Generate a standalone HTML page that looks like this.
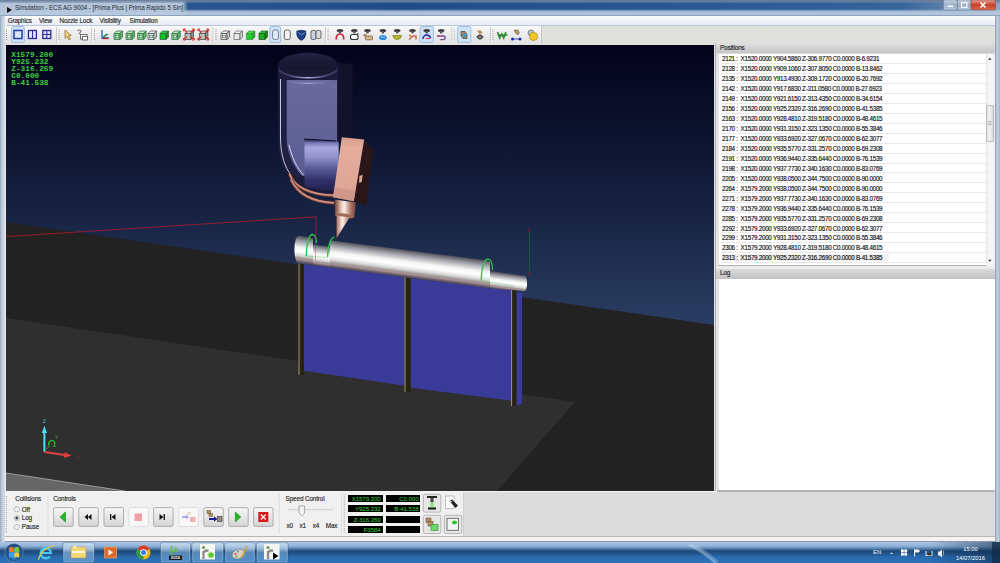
<!DOCTYPE html>
<html><head><meta charset="utf-8">
<style>
*{box-sizing:border-box}
html,body{margin:0;padding:0}
body{width:1000px;height:563px;overflow:hidden;position:relative;background:#b9c9da;font-family:"Liberation Sans",sans-serif;color:#222}
.a{position:absolute}
#frameL{left:0;top:0;width:6px;height:563px;background:linear-gradient(90deg,#8a9ab0 0,#b4c4d6 1px,#c6d2e0 3px,#d0d8e2 4.3px,#e4e6e8 5px,#e8e8e8 6px)}
#frameR{left:995px;top:0;width:5px;height:563px;background:linear-gradient(90deg,#8898aa 0,#a9bccf 1px,#c2d2e2 3px,#9fb0c4 5px)}
#title{left:0;top:0;width:1000px;height:16px;background:linear-gradient(90deg,#b4c4d8 0,#b4c6da 182px,#2a5690 188px,#1f4d88 400px,#2a5a92 700px,#33649a 900px,#6a8ab0 960px,#8fa8c4 1000px)}
#titleshade{left:0;top:0;width:1000px;height:16px;background:linear-gradient(180deg,#6a7a90 0,rgba(110,132,165,.85) 1px,rgba(110,132,165,.5) 2.5px,rgba(0,0,0,0) 3.5px,rgba(0,0,0,0) 9px,rgba(178,198,222,.9) 11.5px,rgba(185,203,225,.95) 15px,#8ea3bb 15px)}
#ttext{left:15px;top:4.1px;font-size:6.3px;letter-spacing:-0.085px;color:#2a3040;white-space:nowrap}
#menubar{left:4.5px;top:15.7px;width:990.5px;height:9.8px;background:linear-gradient(180deg,#fdfdfe,#e8ebf5)}
.mi{position:absolute;top:1.1px;font-size:6.3px;letter-spacing:-0.15px;color:#111;-webkit-text-stroke:0.15px #444;white-space:nowrap}
#toolbar{left:4.5px;top:25.5px;width:990.5px;height:19px;background:#e0e0dc}
#tbseg{left:4.5px;top:25.5px;width:537.5px;height:18.5px;background:linear-gradient(180deg,#fafafa 0,#f0f0f0 30%,#e2e2e2 100%);border-right:1px solid #c8c8c8}
#vp{left:6px;top:45px;width:708px;height:446px}
#vptop{left:6px;top:44px;width:708px;height:1px;background:#20202a}
#rpanel{left:714px;top:44px;width:281px;height:447px;background:#dcdcdc}
#ctrl{left:4.5px;top:491px;width:990.5px;height:45px;background:#dcdcdc;border-top:1px solid #f6f6f6}
#strip{left:4.5px;top:536px;width:990.5px;height:6px;background:#f4f4f4;border-top:1px solid #bdb6ae;border-bottom:1px solid #8a98a8}
#taskbar{left:0;top:542px;width:1000px;height:21px;background:linear-gradient(180deg,#6b8db5 0,#2f5d8d 40%,#25507c 100%)}
#poshdr{left:716px;top:42.8px;width:279px;height:10.7px;background:linear-gradient(180deg,#dedede,#c6c6c6);font-size:6.4px;letter-spacing:-0.15px;padding:1.2px 0 0 4px;color:#111;-webkit-text-stroke:0.15px #444}
#list{left:717px;top:53.5px;width:278px;height:212.5px;background:#fff;border-left:2px solid #e4e4e4;border-bottom:1.5px solid #b0b0b0;overflow:hidden}
.row{position:absolute;left:719px;width:266.5px;height:9.95px;border-bottom:1px solid #e8e8e8;font-size:6.3px;letter-spacing:-0.3px;white-space:nowrap;padding:1.3px 0 0 1px;color:#000;-webkit-text-stroke:0.15px #333}
.row.sel span{background:#f0f0f0;padding-right:7px}
#sb{left:985.5px;top:53.5px;width:9.5px;height:212px;background:linear-gradient(90deg,#e6e6e6,#f6f6f6 30%,#f6f6f6 70%,#ececec)}
#thumb{left:986px;top:105px;width:8px;height:36.5px;background:linear-gradient(90deg,#e2e2e2,#f2f2f2 50%,#d8d8d8);border:1px solid #bcbcbc;border-radius:1px}
#loghdr{left:716px;top:268.6px;width:279px;height:10px;background:linear-gradient(180deg,#dadada,#c2c2c2);font-size:6.4px;letter-spacing:-0.15px;padding:0.9px 0 0 4px;color:#111;-webkit-text-stroke:0.15px #444}
#log{left:717px;top:278.5px;width:278px;height:214px;background:#fff;border-left:2px solid #e4e4e4;border-bottom:1.6px solid #b8b8b8}
#split{left:714px;top:44px;width:3px;height:447px;background:linear-gradient(90deg,#e6e6e6 0,#e6e6e6 1px,#a9a9a9 1px,#a9a9a9 2px,#e8e8e8 2px)}
.dro{position:absolute;width:34.3px;height:7px;background:#000;color:#3ad23a;font-size:6.2px;line-height:7px;text-align:right;padding-right:2px;white-space:nowrap;letter-spacing:-0.1px}
.btn{position:absolute;width:19.5px;height:19px;border:1px solid #a8a8a8;border-radius:2px;background:linear-gradient(180deg,#f6f6f6 0,#e8e8e8 50%,#d6d6d6 100%)}
.lbl{position:absolute;font-size:6.3px;color:#111;-webkit-text-stroke:0.15px #444;white-space:nowrap;letter-spacing:-0.1px}
#ctrlseg{left:4.5px;top:492px;width:459px;height:43.5px;background:#f0f0f0;border-right:1px solid #d0d0d0}
.ovl{left:11.3px;font-family:"Liberation Mono",monospace;font-weight:bold;font-size:7.75px;line-height:6.9px;color:#3ad23a;white-space:nowrap}

</style></head><body>
<div class="a" id="frameL"></div>
<div class="a" id="frameR"></div>
<div class="a" id="title"></div>
<div class="a" id="titleshade"></div>
<svg class="a" style="left:0;top:0" width="20" height="16" viewBox="0 0 20 16"><path d="M5,4.5 h4 l-1,1.5 h-2.2 v5 h-0.8 Z" fill="#c8c8c8"/><path d="M7,7 l5,3 -5,3 Z" fill="#111"/></svg>
<svg class="a" style="left:940px;top:0" width="56" height="12" viewBox="940 0 56 12">
<defs><linearGradient id="wbg" x1="0" y1="0" x2="0" y2="1"><stop offset="0" stop-color="#c8d4e2"/><stop offset="0.5" stop-color="#9aaec4"/><stop offset="1" stop-color="#b8c8da"/></linearGradient>
<linearGradient id="wcl" x1="0" y1="0" x2="0" y2="1"><stop offset="0" stop-color="#e8a090"/><stop offset="0.5" stop-color="#c8402a"/><stop offset="1" stop-color="#d86a50"/></linearGradient></defs>
<rect x="943.4" y="0" width="14" height="10" rx="1.5" fill="url(#wbg)" stroke="#6a7a8e" stroke-width="0.5"/>
<rect x="957.4" y="0" width="13.6" height="10" rx="1.5" fill="url(#wbg)" stroke="#6a7a8e" stroke-width="0.5"/>
<rect x="971" y="0" width="24.5" height="10" rx="1.5" fill="url(#wcl)" stroke="#7a4a40" stroke-width="0.5"/>
<rect x="947.5" y="5.5" width="5.5" height="1.5" fill="#fff"/>
<rect x="961.5" y="2.8" width="5.5" height="4.5" fill="none" stroke="#fff" stroke-width="1"/>
<path d="M980.5,2.5 l5,5 M985.5,2.5 l-5,5" stroke="#fff" stroke-width="1.5"/>
</svg>
<div class="a" id="ttext">Simulation - ECS AG 9004 - [Prima Plus | Prima Rapido 5 Sin]</div>
<div class="a" id="menubar">
 <span class="mi" style="left:3.2px">Graphics</span>
 <span class="mi" style="left:34.5px">View</span>
 <span class="mi" style="left:55px">Nozzle Lock</span>
 <span class="mi" style="left:95px">Visibility</span>
 <span class="mi" style="left:125.1px">Simulation</span>
</div>
<div class="a" id="toolbar"></div><div class="a" id="tbseg"></div>
<svg class="a" style="left:0;top:25px" width="545" height="19" viewBox="0 25 545 19"><rect x="6.0" y="29" width="1" height="1" fill="#9a9a9a"/><rect x="6.0" y="31" width="1" height="1" fill="#9a9a9a"/><rect x="6.0" y="33" width="1" height="1" fill="#9a9a9a"/><rect x="6.0" y="35" width="1" height="1" fill="#9a9a9a"/><rect x="6.0" y="37" width="1" height="1" fill="#9a9a9a"/><rect x="6.0" y="39" width="1" height="1" fill="#9a9a9a"/><rect x="58.5" y="29" width="1" height="1" fill="#9a9a9a"/><rect x="58.5" y="31" width="1" height="1" fill="#9a9a9a"/><rect x="58.5" y="33" width="1" height="1" fill="#9a9a9a"/><rect x="58.5" y="35" width="1" height="1" fill="#9a9a9a"/><rect x="58.5" y="37" width="1" height="1" fill="#9a9a9a"/><rect x="58.5" y="39" width="1" height="1" fill="#9a9a9a"/><rect x="93.9" y="29" width="1" height="1" fill="#9a9a9a"/><rect x="93.9" y="31" width="1" height="1" fill="#9a9a9a"/><rect x="93.9" y="33" width="1" height="1" fill="#9a9a9a"/><rect x="93.9" y="35" width="1" height="1" fill="#9a9a9a"/><rect x="93.9" y="37" width="1" height="1" fill="#9a9a9a"/><rect x="93.9" y="39" width="1" height="1" fill="#9a9a9a"/><rect x="215.4" y="29" width="1" height="1" fill="#9a9a9a"/><rect x="215.4" y="31" width="1" height="1" fill="#9a9a9a"/><rect x="215.4" y="33" width="1" height="1" fill="#9a9a9a"/><rect x="215.4" y="35" width="1" height="1" fill="#9a9a9a"/><rect x="215.4" y="37" width="1" height="1" fill="#9a9a9a"/><rect x="215.4" y="39" width="1" height="1" fill="#9a9a9a"/><rect x="327.5" y="29" width="1" height="1" fill="#9a9a9a"/><rect x="327.5" y="31" width="1" height="1" fill="#9a9a9a"/><rect x="327.5" y="33" width="1" height="1" fill="#9a9a9a"/><rect x="327.5" y="35" width="1" height="1" fill="#9a9a9a"/><rect x="327.5" y="37" width="1" height="1" fill="#9a9a9a"/><rect x="327.5" y="39" width="1" height="1" fill="#9a9a9a"/><rect x="453.5" y="29" width="1" height="1" fill="#9a9a9a"/><rect x="453.5" y="31" width="1" height="1" fill="#9a9a9a"/><rect x="453.5" y="33" width="1" height="1" fill="#9a9a9a"/><rect x="453.5" y="35" width="1" height="1" fill="#9a9a9a"/><rect x="453.5" y="37" width="1" height="1" fill="#9a9a9a"/><rect x="453.5" y="39" width="1" height="1" fill="#9a9a9a"/><rect x="492.3" y="29" width="1" height="1" fill="#9a9a9a"/><rect x="492.3" y="31" width="1" height="1" fill="#9a9a9a"/><rect x="492.3" y="33" width="1" height="1" fill="#9a9a9a"/><rect x="492.3" y="35" width="1" height="1" fill="#9a9a9a"/><rect x="492.3" y="37" width="1" height="1" fill="#9a9a9a"/><rect x="492.3" y="39" width="1" height="1" fill="#9a9a9a"/><rect x="56.2" y="27" width="1" height="15" fill="#c4c4c4"/><rect x="57.2" y="27" width="1" height="15" fill="#fafafa"/><rect x="91.2" y="27" width="1" height="15" fill="#c4c4c4"/><rect x="92.2" y="27" width="1" height="15" fill="#fafafa"/><rect x="212.5" y="27" width="1" height="15" fill="#c4c4c4"/><rect x="213.5" y="27" width="1" height="15" fill="#fafafa"/><rect x="325.1" y="27" width="1" height="15" fill="#c4c4c4"/><rect x="326.1" y="27" width="1" height="15" fill="#fafafa"/><rect x="451.5" y="27" width="1" height="15" fill="#c4c4c4"/><rect x="452.5" y="27" width="1" height="15" fill="#fafafa"/><rect x="490.1" y="27" width="1" height="15" fill="#c4c4c4"/><rect x="491.1" y="27" width="1" height="15" fill="#fafafa"/><rect x="11.7" y="26.5" width="12.600000000000001" height="16" rx="1.5" fill="#cfe3f7" stroke="#8fb5dc" stroke-width="0.8"/><rect x="269.8" y="26.5" width="10.800000000000011" height="16" rx="1.5" fill="#cfe3f7" stroke="#8fb5dc" stroke-width="0.8"/><rect x="420" y="26.5" width="13.399999999999977" height="16" rx="1.5" fill="#cfe3f7" stroke="#8fb5dc" stroke-width="0.8"/><rect x="457.6" y="26.5" width="13.199999999999989" height="16" rx="1.5" fill="#cfe3f7" stroke="#8fb5dc" stroke-width="0.8"/><rect x="14" y="30.5" width="8" height="8" fill="#dbe6f8" stroke="#2a3aa8" stroke-width="1.5"/><rect x="28.4" y="30.5" width="8" height="8" fill="#dfe3f5" stroke="#2a2a9a" stroke-width="1.3"/><rect x="32" y="30.5" width="1" height="8" fill="#2a2a9a"/><rect x="42.8" y="30.5" width="8" height="8" fill="#dfe3f5" stroke="#2a2a9a" stroke-width="1.3"/><rect x="46.3" y="30.5" width="1" height="8" fill="#2a2a9a"/><rect x="42.8" y="34" width="8" height="1" fill="#2a2a9a"/><path d="M65,30 L65,38.5 L67,36.5 L69,40 L70.5,39.2 L68.6,35.8 L71.3,35.5 Z" fill="#f2d27a" stroke="#8a6a2a" stroke-width="0.7"/><path d="M77.5,31 q2,-2 3.5,0 q0,1.5 -1.7,2.3 v1" fill="none" stroke="#777" stroke-width="1.1"/><rect x="80.5" y="34.5" width="6.5" height="4.5" fill="#f4f4f4" stroke="#555" stroke-width="0.8"/><rect x="82.5" y="36.5" width="5" height="3.5" fill="#fff" stroke="#555" stroke-width="0.8"/><path d="M102,30 v9 M102,38 h7 M102,38 l5,-4" stroke="#2c6ac8" stroke-width="1.4" fill="none"/><path d="M103,37.5 l5,-3.5" stroke="#3a9a3a" stroke-width="1.4"/><path d="M102.5,38.5 h6" stroke="#c02020" stroke-width="1.4"/><path d="M114,33.5 h6 v6 h-6 Z" fill="#7cd488" stroke="#2a5a3a" stroke-width="0.65"/><path d="M114,33.5 l2.5,-2.5 h6 l-2.5,2.5 Z" fill="#b4ecb8" stroke="#2a5a3a" stroke-width="0.65"/><path d="M120,33.5 l2.5,-2.5 v6 l-2.5,2.5 Z" fill="#5cb868" stroke="#2a5a3a" stroke-width="0.65"/><rect x="115.5" y="35.2" width="3" height="2.6" fill="#e0f6e0" stroke="#2a5a3a" stroke-width="0.5"/><path d="M126,33.5 h6 v6 h-6 Z" fill="#7cd488" stroke="#2a5a3a" stroke-width="0.65"/><path d="M126,33.5 l2.5,-2.5 h6 l-2.5,2.5 Z" fill="#b4ecb8" stroke="#2a5a3a" stroke-width="0.65"/><path d="M132,33.5 l2.5,-2.5 v6 l-2.5,2.5 Z" fill="#5cb868" stroke="#2a5a3a" stroke-width="0.65"/><rect x="127.5" y="35.2" width="3" height="2.6" fill="#e0f6e0" stroke="#2a5a3a" stroke-width="0.5"/><path d="M137.6,33.5 h6 v6 h-6 Z" fill="#7cd488" stroke="#2a5a3a" stroke-width="0.65"/><path d="M137.6,33.5 l2.5,-2.5 h6 l-2.5,2.5 Z" fill="#b4ecb8" stroke="#2a5a3a" stroke-width="0.65"/><path d="M143.6,33.5 l2.5,-2.5 v6 l-2.5,2.5 Z" fill="#5cb868" stroke="#2a5a3a" stroke-width="0.65"/><rect x="139.1" y="35.2" width="3" height="2.6" fill="#e0f6e0" stroke="#2a5a3a" stroke-width="0.5"/><path d="M148,33.5 h6 v6 h-6 Z" fill="#d8ecd8" stroke="#3a3a4a" stroke-width="0.65"/><path d="M148,33.5 l2.5,-2.5 h6 l-2.5,2.5 Z" fill="#e8f4e8" stroke="#3a3a4a" stroke-width="0.65"/><path d="M154,33.5 l2.5,-2.5 v6 l-2.5,2.5 Z" fill="#b8d0b8" stroke="#3a3a4a" stroke-width="0.65"/><rect x="149.5" y="35.2" width="3" height="2.6" fill="#e0f6e0" stroke="#3a3a4a" stroke-width="0.5"/><path d="M160,33.5 h6 v6 h-6 Z" fill="#10c020" stroke="#2a5a3a" stroke-width="0.65"/><path d="M160,33.5 l2.5,-2.5 h6 l-2.5,2.5 Z" fill="#30d040" stroke="#2a5a3a" stroke-width="0.65"/><path d="M166,33.5 l2.5,-2.5 v6 l-2.5,2.5 Z" fill="#109020" stroke="#2a5a3a" stroke-width="0.65"/><path d="M171.8,33.5 h6 v6 h-6 Z" fill="#7cd488" stroke="#2a5a3a" stroke-width="0.65"/><path d="M171.8,33.5 l2.5,-2.5 h6 l-2.5,2.5 Z" fill="#b4ecb8" stroke="#2a5a3a" stroke-width="0.65"/><path d="M177.8,33.5 l2.5,-2.5 v6 l-2.5,2.5 Z" fill="#5cb868" stroke="#2a5a3a" stroke-width="0.65"/><rect x="173.3" y="35.2" width="3" height="2.6" fill="#e0f6e0" stroke="#2a5a3a" stroke-width="0.5"/><path d="M185.0,33.5 h6 v6 h-6 Z" fill="#b8c4b8" stroke="#333" stroke-width="0.65"/><path d="M185.0,33.5 l2.5,-2.5 h6 l-2.5,2.5 Z" fill="#d0d8d0" stroke="#333" stroke-width="0.65"/><path d="M191.0,33.5 l2.5,-2.5 v6 l-2.5,2.5 Z" fill="#8a9a8a" stroke="#333" stroke-width="0.65"/><path d="M184.0,29.5 l3,3 M193.8,29.5 l-3,3 M184.0,39.5 l3,-3 M193.8,39.5 l-3,-3" stroke="#d83030" stroke-width="1.4"/><path d="M183.5,29 h2.2 M183.5,29 v2.2 M194.3,29 h-2.2 M194.3,29 v2.2 M183.5,40 h2.2 M183.5,40 v-2.2 M194.3,40 h-2.2 M194.3,40 v-2.2" stroke="#d83030" stroke-width="1"/><path d="M199.4,33.5 h6 v6 h-6 Z" fill="#b8c4b8" stroke="#333" stroke-width="0.65"/><path d="M199.4,33.5 l2.5,-2.5 h6 l-2.5,2.5 Z" fill="#d0d8d0" stroke="#333" stroke-width="0.65"/><path d="M205.4,33.5 l2.5,-2.5 v6 l-2.5,2.5 Z" fill="#8a9a8a" stroke="#333" stroke-width="0.65"/><path d="M198.4,29.5 l3,3 M208.20000000000002,29.5 l-3,3 M198.4,39.5 l3,-3 M208.20000000000002,39.5 l-3,-3" stroke="#d83030" stroke-width="1.4"/><path d="M197.9,29 h2.2 M197.9,29 v2.2 M208.70000000000002,29 h-2.2 M208.70000000000002,29 v2.2 M197.9,40 h2.2 M197.9,40 v-2.2 M208.70000000000002,40 h-2.2 M208.70000000000002,40 v-2.2" stroke="#d83030" stroke-width="1"/><path d="M221,33.5 h6 v6 h-6 Z" fill="#e8e8e8" stroke="#333" stroke-width="0.65"/><path d="M221,33.5 l2.5,-2.5 h6 l-2.5,2.5 Z" fill="#f4f4f4" stroke="#333" stroke-width="0.65"/><path d="M227,33.5 l2.5,-2.5 v6 l-2.5,2.5 Z" fill="#cfcfcf" stroke="#333" stroke-width="0.65"/><rect x="222.5" y="35.2" width="3" height="2.6" fill="#e0f6e0" stroke="#333" stroke-width="0.5"/><path d="M234,33.5 h6 v6 h-6 Z" fill="#e8e8e8" stroke="#555" stroke-width="0.65"/><path d="M234,33.5 l2.5,-2.5 h6 l-2.5,2.5 Z" fill="#f4f4f4" stroke="#555" stroke-width="0.65"/><path d="M240,33.5 l2.5,-2.5 v6 l-2.5,2.5 Z" fill="#cfcfcf" stroke="#555" stroke-width="0.65"/><path d="M246.4,33.5 h6 v6 h-6 Z" fill="#22d22a" stroke="#3a8a3a" stroke-width="0.65"/><path d="M246.4,33.5 l2.5,-2.5 h6 l-2.5,2.5 Z" fill="#44e04a" stroke="#3a8a3a" stroke-width="0.65"/><path d="M252.4,33.5 l2.5,-2.5 v6 l-2.5,2.5 Z" fill="#22b02a" stroke="#3a8a3a" stroke-width="0.65"/><path d="M259,33.5 h6 v6 h-6 Z" fill="#18b020" stroke="#1a4a1a" stroke-width="0.65"/><path d="M259,33.5 l2.5,-2.5 h6 l-2.5,2.5 Z" fill="#30c838" stroke="#1a4a1a" stroke-width="0.65"/><path d="M265,33.5 l2.5,-2.5 v6 l-2.5,2.5 Z" fill="#108818" stroke="#1a4a1a" stroke-width="0.65"/><rect x="272.5" y="30" width="6" height="9.5" rx="2" fill="#dde6f2" stroke="#6a7a8a" stroke-width="0.9"/><rect x="284.3" y="30" width="6" height="9.5" rx="2" fill="#f2f2f2" stroke="#555" stroke-width="0.9"/><path d="M296.8,31 q4.5,-1.5 9,0 v4 q-1,4 -4.5,5.5 q-3.5,-1.5 -4.5,-5.5 Z" fill="#1d3f88" stroke="#0f2050" stroke-width="0.6"/><path d="M298.5,32.5 l3,2.5 l3,-2.5" stroke="#8ab0e0" stroke-width="0.8" fill="none"/><rect x="311" y="30.5" width="5" height="9" rx="1.5" fill="#c8d2e6" stroke="#555" stroke-width="0.9"/><rect x="316" y="30.5" width="5" height="8" rx="1.5" fill="#dcdcdc" stroke="#555" stroke-width="0.9"/><ellipse cx="340.0" cy="30.6" rx="3.3" ry="1.7" fill="#3a3a3a"/><rect x="338.8" y="31" width="2.4" height="2.4" fill="#555"/><path d="M336.2,39.5 q0,-5.5 3.8,-5.5 q3.8,0 3.8,5.5" fill="none" stroke="#c82a3a" stroke-width="1.7"/><ellipse cx="354.3" cy="30.6" rx="3.3" ry="1.7" fill="#3a3a3a"/><rect x="353.1" y="31" width="2.4" height="2.4" fill="#555"/><rect x="350.5" y="34.5" width="7.6" height="5" rx="2" fill="#fff" stroke="#333" stroke-width="1.1"/><circle cx="357.8" cy="34" r="0.7" fill="#000"/><ellipse cx="367.5" cy="30.6" rx="3.3" ry="1.7" fill="#3a3a3a"/><rect x="366.3" y="31" width="2.4" height="2.4" fill="#555"/><path d="M363.5,34 h3 v2.5 h-3 Z" fill="#b08060"/><rect x="365.5" y="36" width="7" height="3.8" rx="1" fill="#d8b890" stroke="#6a4a2a" stroke-width="0.7"/><ellipse cx="382.9" cy="30.6" rx="3.3" ry="1.7" fill="#3a3a3a"/><rect x="381.7" y="31" width="2.4" height="2.4" fill="#555"/><ellipse cx="382.9" cy="37.5" rx="3.8" ry="2.6" fill="#2a88d8"/><path d="M380.9,37 h4" stroke="#fff" stroke-width="0.6"/><ellipse cx="397.2" cy="30.6" rx="3.3" ry="1.7" fill="#3a3a3a"/><rect x="396.0" y="31" width="2.4" height="2.4" fill="#555"/><path d="M392.7,35.5 h9 q-1,4 -4.5,4 q-3.5,0 -4.5,-4 Z" fill="#b8b828" stroke="#6a6a10" stroke-width="0.6"/><ellipse cx="412.5" cy="30.6" rx="3.3" ry="1.7" fill="#3a3a3a"/><rect x="411.3" y="31" width="2.4" height="2.4" fill="#555"/><path d="M409.0,35 l3,2 l-3,2.5 M412.5,36 h3.5 v3.5" fill="none" stroke="#d8603a" stroke-width="1.4"/><ellipse cx="426.7" cy="30.6" rx="3.3" ry="1.7" fill="#3a3a3a"/><rect x="425.5" y="31" width="2.4" height="2.4" fill="#555"/><path d="M422.7,39 q1,-4 4,-4 q3,0 4,3" fill="none" stroke="#2a2a9a" stroke-width="1.4"/><path d="M425.7,38.5 h4.5" stroke="#d83a5a" stroke-width="1.2"/><ellipse cx="441.2" cy="30.6" rx="3.3" ry="1.7" fill="#3a3a3a"/><rect x="440.0" y="31" width="2.4" height="2.4" fill="#555"/><path d="M437.2,36 h6 q2,0 2,1.8 q0,1.8 -2,1.8 h-3" fill="none" stroke="#7a4a9a" stroke-width="1.3"/><path d="M437.2,36 h3" stroke="#d84a6a" stroke-width="1.3"/><path d="M461,31.5 h4 l2,3 v4 h-4 l-2,-3 Z" fill="#9a8a6a" stroke="#444" stroke-width="0.7"/><rect x="463" y="34" width="3" height="3" fill="#3a9aba"/><path d="M477,30.5 h4 l1.5,2.5 -3,1 Z" fill="#b08a5a"/><path d="M476,37 l4,-3 4,3 -4,3 Z" fill="#111"/><path d="M480,34 v6 M476,37 h8" stroke="#ddd" stroke-width="0.7"/><path d="M497.5,32 l2.2,6 l2,-4 l2,4 l2.2,-6 M497.5,35 h10" stroke="#2a8a2a" stroke-width="1.6" fill="none"/><path d="M514,30 h4 l1.5,3 -2,2 -2,-2 Z" fill="#b0965a" stroke="#555" stroke-width="0.5"/><circle cx="512.5" cy="39" r="1.5" fill="#1a2aa8"/><circle cx="520" cy="39" r="1.5" fill="#1a2aa8"/><path d="M513,39 h7" stroke="#1a2aa8" stroke-width="0.8"/><circle cx="531" cy="33" r="3" fill="#b8c0c8" stroke="#6a6a6a" stroke-width="0.7"/><circle cx="533.5" cy="36.5" r="4" fill="#f0c820" stroke="#b08a10" stroke-width="0.7"/></svg>
<svg class="a" id="vp" viewBox="6 45 708 446" width="708" height="446" style="left:6px;top:45px">
<defs>
<linearGradient id="sky" x1="0" y1="45" x2="0" y2="330" gradientUnits="userSpaceOnUse">
 <stop offset="0" stop-color="#03031a"/><stop offset="0.45" stop-color="#111a38"/><stop offset="1" stop-color="#2b3e63"/>
</linearGradient>
<linearGradient id="pipeg" x1="0" y1="0" x2="0" y2="1">
 <stop offset="0" stop-color="#55555c"/><stop offset="0.2" stop-color="#a8a8aa"/><stop offset="0.45" stop-color="#ffffff"/>
 <stop offset="0.62" stop-color="#f0f0f0"/><stop offset="0.8" stop-color="#9a9a9a"/><stop offset="0.93" stop-color="#6a4a4a"/><stop offset="1" stop-color="#3a2a30"/>
</linearGradient>
<linearGradient id="capg" x1="0" y1="0" x2="1" y2="0">
 <stop offset="0" stop-color="#8a8a8e"/><stop offset="0.5" stop-color="#d8d8d8"/><stop offset="1" stop-color="#f4f4f4"/>
</linearGradient>
<linearGradient id="facelav" x1="0" y1="0" x2="0" y2="1">
 <stop offset="0" stop-color="#6a6a9c"/><stop offset="1" stop-color="#5a5c92"/>
</linearGradient>
<linearGradient id="smallcyl" x1="0" y1="0" x2="0" y2="1">
 <stop offset="0" stop-color="#1a1a40"/><stop offset="0.07" stop-color="#7a7ab8"/><stop offset="0.16" stop-color="#aaaae0"/><stop offset="0.35" stop-color="#9090c8"/><stop offset="0.55" stop-color="#5a5a98"/><stop offset="0.78" stop-color="#30306a"/><stop offset="1" stop-color="#22224a"/>
</linearGradient>
<linearGradient id="copperf" x1="0" y1="0" x2="0" y2="1">
 <stop offset="0" stop-color="#d89c8c"/><stop offset="0.15" stop-color="#e4ac9c"/><stop offset="1" stop-color="#dca494"/>
</linearGradient>
<linearGradient id="collarg" x1="0" y1="0" x2="1" y2="0">
 <stop offset="0" stop-color="#6a3a32"/><stop offset="0.3" stop-color="#e8c0b0"/><stop offset="0.45" stop-color="#fff0ea"/><stop offset="0.75" stop-color="#b07868"/><stop offset="1" stop-color="#6a4038"/>
</linearGradient>
<linearGradient id="coneg" x1="0" y1="0" x2="1" y2="0">
 <stop offset="0" stop-color="#a87060"/><stop offset="0.45" stop-color="#fff0e8"/><stop offset="1" stop-color="#b07868"/>
</linearGradient>
<linearGradient id="capdisc" x1="0" y1="0" x2="0" y2="1">
 <stop offset="0" stop-color="#222244"/><stop offset="0.6" stop-color="#15152e"/><stop offset="1" stop-color="#20203e"/>
</linearGradient>
</defs>
<rect x="6" y="45" width="708" height="446" fill="url(#sky)"/>
<polygon points="6,222 714,325 714,491 6,491" fill="#222222"/>
<polygon points="6,318 575,402 497,491 6,491" fill="#2f2f2f"/>
<polygon points="6,473 125,491 6,491" fill="#666"/><path d="M6,473 L125,491" stroke="#b0b0b0" stroke-width="0.8"/>
<path d="M6,236.6 L316,216.8 L316,259" fill="none" stroke="#b01c30" stroke-width="0.8"/>
<path d="M529.5,229 L529.5,275" fill="none" stroke="#a01c30" stroke-width="0.8"/>
<polygon points="516.4,292 522,293 522,403.4 516.4,406" fill="#3a3aa0"/>
<polygon points="304,258 405,272 405,385.8 304,370.7" fill="#3a3a98"/>
<polygon points="410.7,273 511,288 511,400.6 410.7,387.8" fill="#3a3a98"/>
<rect x="298.5" y="255" width="5.5" height="120" fill="#262410"/>
<rect x="298.5" y="255" width="1.1" height="120" fill="#9a8a70"/>
<rect x="404.5" y="270" width="6.0" height="122" fill="#262410"/>
<rect x="404.5" y="270" width="1.1" height="122" fill="#9a8a70"/>
<rect x="511" y="286" width="5.399999999999977" height="120" fill="#262410"/>
<rect x="511" y="286" width="1.1" height="120" fill="#9a8a70"/>
<defs><linearGradient id="pgA" gradientUnits="userSpaceOnUse" x1="300" y1="236" x2="296.45" y2="263.28"><stop offset="0" stop-color="#4a4a54"/><stop offset="0.18" stop-color="#9c9ca4"/><stop offset="0.42" stop-color="#f6f6f6"/><stop offset="0.55" stop-color="#ffffff"/><stop offset="0.7" stop-color="#d8d8d8"/><stop offset="0.8" stop-color="#a09898"/><stop offset="0.86" stop-color="#a88c8c"/><stop offset="0.92" stop-color="#686070"/><stop offset="1" stop-color="#3a3a50"/></linearGradient><linearGradient id="pgB" gradientUnits="userSpaceOnUse" x1="320" y1="245" x2="317.23" y2="266.33"><stop offset="0" stop-color="#4a4a54"/><stop offset="0.18" stop-color="#9c9ca4"/><stop offset="0.42" stop-color="#f6f6f6"/><stop offset="0.55" stop-color="#ffffff"/><stop offset="0.7" stop-color="#d8d8d8"/><stop offset="0.8" stop-color="#a09898"/><stop offset="0.86" stop-color="#a88c8c"/><stop offset="0.92" stop-color="#686070"/><stop offset="1" stop-color="#3a3a50"/></linearGradient><linearGradient id="pgC" gradientUnits="userSpaceOnUse" x1="400" y1="248.9" x2="396.38" y2="276.78"><stop offset="0" stop-color="#4a4a54"/><stop offset="0.18" stop-color="#9c9ca4"/><stop offset="0.42" stop-color="#f6f6f6"/><stop offset="0.55" stop-color="#ffffff"/><stop offset="0.7" stop-color="#d8d8d8"/><stop offset="0.8" stop-color="#a09898"/><stop offset="0.86" stop-color="#a88c8c"/><stop offset="0.92" stop-color="#686070"/><stop offset="1" stop-color="#3a3a50"/></linearGradient><linearGradient id="pgD" gradientUnits="userSpaceOnUse" x1="505" y1="273" x2="502.74" y2="290.36"><stop offset="0" stop-color="#4a4a54"/><stop offset="0.18" stop-color="#9c9ca4"/><stop offset="0.42" stop-color="#f6f6f6"/><stop offset="0.55" stop-color="#ffffff"/><stop offset="0.7" stop-color="#d8d8d8"/><stop offset="0.8" stop-color="#a09898"/><stop offset="0.86" stop-color="#a88c8c"/><stop offset="0.92" stop-color="#686070"/><stop offset="1" stop-color="#3a3a50"/></linearGradient></defs>
<path d="M299,235.6 L313,238.2 L313,265.6 L299,263.8 Q294.6,262.3 294.6,250 Q294.6,236.5 299,235.6 Z" fill="url(#pgA)"/>
<polygon points="313,244.5 330,246.5 330,267.8 313,265.6" fill="url(#pgB)"/>
<polygon points="330,240.3 490,260.8 490,288.6 330,267.8" fill="url(#pgC)"/>
<polygon points="490,270.8 524.5,275.8 524.5,291 490,288.6" fill="url(#pgD)"/>
<ellipse cx="524.5" cy="283.4" rx="2.6" ry="7.6" fill="url(#pgD)"/>
<defs><linearGradient id="lcap" x1="0" y1="0" x2="1" y2="0"><stop offset="0" stop-color="#6a6a74"/><stop offset="0.5" stop-color="#b4b4b8"/><stop offset="1" stop-color="#d0d0d4"/></linearGradient></defs>
<path d="M295.5,244 Q295,250 296,256" stroke="#ffffff" stroke-width="2" opacity="0.35" fill="none"/>
<path d="M306.3,256 C306.5,242 309.5,234.5 312.3,234.5 C314.8,234.6 316.3,238 316.3,243" fill="none" stroke="#28c848" stroke-width="1.3"/>
<path d="M327.6,257 C328,246 330.5,238 334.5,236.8" fill="none" stroke="#28c848" stroke-width="1.3"/>
<path d="M306.3,256 L327.6,257.5" stroke="#60d070" stroke-width="0.7" opacity="0.7"/>
<path d="M315.5,236 L315.5,260" stroke="#c03050" stroke-width="0.8" opacity="0.55"/>
<path d="M481.3,280.5 C481.3,268 484.5,259 488,258.8 C490.8,259 492.5,263.5 492.5,270" fill="none" stroke="#28c848" stroke-width="1.3"/>
<path d="M481.3,280.5 L514,286" stroke="#60d070" stroke-width="0.7" opacity="0.6"/>
<polygon points="338,63 352.5,64 352.5,142 338,142" fill="#12122a"/>
<path d="M278,66 L278,140 C278,160 286,178 298,190 L338,193 L338,66 Z" fill="#1c1c3c"/>
<path d="M286.5,80 L337,80 L337,176 L302,176 C294,168 287.5,155 286.5,140 Z" fill="url(#facelav)"/>
<path d="M281,78 L286.5,80 L286.5,140 C287.5,155 294,168 302,176 L296,178 C285,172 281,158 281,140 Z" fill="#202040"/>
<path d="M280.5,79 L280.5,140 C281,156 285,167 290.8,175" fill="none" stroke="#d8d8f0" stroke-width="0.9"/>
<path d="M289,144.7 C292,158 297,168 303.5,175" fill="none" stroke="#e0e0f8" stroke-width="0.9"/>
<defs><linearGradient id="rimg" x1="278" y1="0" x2="338" y2="0" gradientUnits="userSpaceOnUse"><stop offset="0" stop-color="#4a4a80" stop-opacity="0.4"/><stop offset="0.5" stop-color="#b0b0ee"/><stop offset="1" stop-color="#4a4a80" stop-opacity="0.4"/></linearGradient></defs>
<path d="M278,66 L278,71 C284,80 332,80 338,71 L338,66 Z" fill="#2a2a52"/>
<ellipse cx="308" cy="66" rx="30" ry="13.3" fill="url(#capdisc)"/>
<path d="M279,69.5 C290,80.5 326,80.5 337,69.5" fill="none" stroke="url(#rimg)" stroke-width="1.6"/>
<path d="M287,81.5 C300,84 318,84 337,81" fill="none" stroke="url(#rimg)" stroke-width="1.4" opacity="0.8"/>
<path d="M304.5,139.3 L338.7,141.5 L338.7,192 L304.5,187 Z" fill="url(#smallcyl)"/>
<path d="M304,139 L336,141" stroke="#101028" stroke-width="1.2"/>
<path d="M289.5,174 C294,187 310,195 334,195.5" fill="none" stroke="#5a3030" stroke-width="3.4"/>
<path d="M289.5,174 C294,187 310,195 334,195.5" fill="none" stroke="#b87868" stroke-width="2"/>
<path d="M289.5,174 C294,187 310,195 334,195.5" fill="none" stroke="#e8a898" stroke-width="0.7" transform="translate(0,-0.5)"/>
<path d="M291,179.5 C298,195 313,202 334,203" fill="none" stroke="#5a3030" stroke-width="3.4"/>
<path d="M291,179.5 C298,195 313,202 334,203" fill="none" stroke="#b87868" stroke-width="2"/>
<path d="M291,179.5 C298,195 313,202 334,203" fill="none" stroke="#e8a898" stroke-width="0.7" transform="translate(0,-0.5)"/>
<polygon points="364.2,139.6 373,150.8 366.6,205.2 353.8,201.2" fill="#2a1519"/>
<polygon points="341.8,137.2 364.2,139.6 353.8,201.2 333,197.2" fill="url(#copperf)"/>
<polygon points="334.6,187.6 355.4,191 353.8,201.2 333,197.2" fill="#c89080" opacity="0.6"/>
<polygon points="359.4,176 362.6,174.8 361.8,182 359,182.8" fill="#d8a890"/>
<path d="M334.5,199.5 L356,202.5 L354.5,217 L335,214.5 Z" fill="url(#collarg)"/>
<ellipse cx="344.6" cy="215.8" rx="9.8" ry="2.4" fill="#a06a5a" transform="rotate(7 344.6 215.8)"/>
<path d="M336.5,215.5 L349.5,217.5 L336.6,238 Z" fill="url(#coneg)"/>
<path d="M44.4,451.9 L44.4,432" stroke="#4ae0f0" stroke-width="2"/><path d="M41.8,433 L44.4,425.8 L47,433 Z" fill="#4ae0f0"/>
<path d="M44.4,451.9 L65,455" stroke="#e04040" stroke-width="2"/><path d="M64.5,452.3 L71.6,455.6 L64,458 Z" fill="#e04040"/>
<text x="44.4" y="422.5" font-size="4.5" fill="#4ad0e0" text-anchor="middle" font-family="Liberation Sans">Z</text>
<text x="78" y="458.5" font-size="4.5" fill="#a02828" text-anchor="middle" font-family="Liberation Sans">X</text>
<text x="56.5" y="439" font-size="4.5" fill="#3ab83a" text-anchor="middle" font-family="Liberation Sans">Y</text>
<path d="M49.5,445.5 A3,3 0 1 1 54.5,444.8" fill="none" stroke="#22c022" stroke-width="1.3"/><path d="M52.5,446.5 L55,444.5 L55.5,447 Z" fill="#22c022"/><path d="M46,449.5 L49.5,446" stroke="#22c022" stroke-width="0.9"/>
</svg>
<div class="a ovl" style="top:52.10px">X1579.200</div>
<div class="a ovl" style="top:58.98px">Y925.232</div>
<div class="a ovl" style="top:65.86px">Z-316.269</div>
<div class="a ovl" style="top:72.74px">C0.000</div>
<div class="a ovl" style="top:79.62px">B-41.538</div>
<div class="a" id="rpanel"></div>
<div class="a" id="split"></div>
<div class="a" id="poshdr">Positions</div>
<div class="a" id="list">
<div style="position:absolute;left:-717px;top:-53.5px;width:1000px;height:300px">
<div class="row" style="top:54.10px"><span>2121 : &nbsp;X1520.0000 Y904.5860 Z-306.9770 C0.0000 B-6.9231</span></div>
<div class="row" style="top:64.05px"><span>2128 : &nbsp;X1520.0000 Y909.1060 Z-307.8050 C0.0000 B-13.8462</span></div>
<div class="row" style="top:74.00px"><span>2135 : &nbsp;X1520.0000 Y913.4930 Z-309.1720 C0.0000 B-20.7692</span></div>
<div class="row" style="top:83.95px"><span>2142 : &nbsp;X1520.0000 Y917.6830 Z-311.0580 C0.0000 B-27.6923</span></div>
<div class="row" style="top:93.90px"><span>2149 : &nbsp;X1520.0000 Y921.6150 Z-313.4350 C0.0000 B-34.6154</span></div>
<div class="row" style="top:103.85px"><span>2156 : &nbsp;X1520.0000 Y925.2320 Z-316.2690 C0.0000 B-41.5385</span></div>
<div class="row" style="top:113.80px"><span>2163 : &nbsp;X1520.0000 Y928.4810 Z-319.5180 C0.0000 B-48.4615</span></div>
<div class="row" style="top:123.75px"><span>2170 : &nbsp;X1520.0000 Y931.3150 Z-323.1350 C0.0000 B-55.3846</span></div>
<div class="row" style="top:133.70px"><span>2177 : &nbsp;X1520.0000 Y933.6920 Z-327.0670 C0.0000 B-62.3077</span></div>
<div class="row" style="top:143.65px"><span>2184 : &nbsp;X1520.0000 Y935.5770 Z-331.2570 C0.0000 B-69.2308</span></div>
<div class="row" style="top:153.60px"><span>2191 : &nbsp;X1520.0000 Y936.9440 Z-335.6440 C0.0000 B-76.1539</span></div>
<div class="row" style="top:163.55px"><span>2198 : &nbsp;X1520.0000 Y937.7730 Z-340.1630 C0.0000 B-83.0769</span></div>
<div class="row" style="top:173.50px"><span>2205 : &nbsp;X1520.0000 Y938.0500 Z-344.7500 C0.0000 B-90.0000</span></div>
<div class="row" style="top:183.45px"><span>2264 : &nbsp;X1579.2000 Y938.0500 Z-344.7500 C0.0000 B-90.0000</span></div>
<div class="row" style="top:193.40px"><span>2271 : &nbsp;X1579.2000 Y937.7730 Z-340.1630 C0.0000 B-83.0769</span></div>
<div class="row" style="top:203.35px"><span>2278 : &nbsp;X1579.2000 Y936.9440 Z-335.6440 C0.0000 B-76.1539</span></div>
<div class="row" style="top:213.30px"><span>2285 : &nbsp;X1579.2000 Y935.5770 Z-331.2570 C0.0000 B-69.2308</span></div>
<div class="row" style="top:223.25px"><span>2292 : &nbsp;X1579.2000 Y933.6920 Z-327.0670 C0.0000 B-62.3077</span></div>
<div class="row" style="top:233.20px"><span>2299 : &nbsp;X1579.2000 Y931.3150 Z-323.1350 C0.0000 B-55.3846</span></div>
<div class="row" style="top:243.15px"><span>2306 : &nbsp;X1579.2000 Y928.4810 Z-319.5180 C0.0000 B-48.4615</span></div>
<div class="row sel" style="top:253.10px"><span>2313 : &nbsp;X1579.2000 Y925.2320 Z-316.2690 C0.0000 B-41.5385</span></div>
<div class="row" style="top:263.05px"><span>2320 : &nbsp;X1579.2000 Y926.2160 Z-313.4350 C0.0000 B-34.6154</span></div>
</div></div>
<div class="a" id="sb"></div>
<div class="a" id="thumb"></div><svg class="a" id="sbarrows" style="left:985px;top:53px" width="10" height="214" viewBox="985 53 10 214"><path d="M988,59.8 h3.6 l-1.8,-2 Z" fill="#333"/><path d="M988,259.8 h3.6 l-1.8,2 Z" fill="#333"/><path d="M988.3,121.5 h3 M988.3,123 h3 M988.3,124.5 h3" stroke="#777" stroke-width="0.5"/></svg>
<div class="a" id="gapstrip" style="left:716px;top:266px;width:279px;height:2.6px;background:#ececec"></div><div class="a" id="loghdr">Log</div>
<div class="a" id="log"></div>
<div class="a" id="ctrl"></div><div class="a" id="ctrlseg"></div><div class="a" id="strip"></div><div class="a" style="left:717px;top:490.4px;width:278px;height:1.8px;background:#b4b4b4"></div>
<div class="lbl" style="left:15.2px;top:494.8px">Collisions</div>
<div class="lbl" style="left:53.2px;top:494.8px">Controls</div>
<div class="lbl" style="left:285.6px;top:494.8px">Speed Control</div>
<div class="lbl" style="left:286.4px;top:521.6px">x0</div>
<div class="lbl" style="left:299.4px;top:521.6px">x1</div>
<div class="lbl" style="left:312.8px;top:521.6px">x4</div>
<div class="lbl" style="left:325.8px;top:521.6px">Max</div>
<div class="lbl" style="left:21.8px;top:505.6px">Off</div>
<div class="lbl" style="left:21.8px;top:514.4px">Log</div>
<div class="lbl" style="left:21.8px;top:523.3px">Pause</div>
<svg class="a" style="left:0;top:491px" width="470" height="45" viewBox="0 491 470 45"><rect x="5.8" y="496" width="1" height="1" fill="#a0a0a0"/><rect x="5.8" y="498" width="1" height="1" fill="#a0a0a0"/><rect x="5.8" y="500" width="1" height="1" fill="#a0a0a0"/><rect x="5.8" y="502" width="1" height="1" fill="#a0a0a0"/><rect x="5.8" y="504" width="1" height="1" fill="#a0a0a0"/><rect x="5.8" y="506" width="1" height="1" fill="#a0a0a0"/><rect x="5.8" y="508" width="1" height="1" fill="#a0a0a0"/><rect x="5.8" y="510" width="1" height="1" fill="#a0a0a0"/><rect x="5.8" y="512" width="1" height="1" fill="#a0a0a0"/><rect x="5.8" y="514" width="1" height="1" fill="#a0a0a0"/><rect x="5.8" y="516" width="1" height="1" fill="#a0a0a0"/><rect x="5.8" y="518" width="1" height="1" fill="#a0a0a0"/><rect x="5.8" y="520" width="1" height="1" fill="#a0a0a0"/><rect x="5.8" y="522" width="1" height="1" fill="#a0a0a0"/><rect x="5.8" y="524" width="1" height="1" fill="#a0a0a0"/><rect x="5.8" y="526" width="1" height="1" fill="#a0a0a0"/><rect x="5.8" y="528" width="1" height="1" fill="#a0a0a0"/><rect x="5.8" y="530" width="1" height="1" fill="#a0a0a0"/><rect x="5.8" y="532" width="1" height="1" fill="#a0a0a0"/><rect x="343.7" y="494" width="1" height="1" fill="#a0a0a0"/><rect x="343.7" y="496" width="1" height="1" fill="#a0a0a0"/><rect x="343.7" y="498" width="1" height="1" fill="#a0a0a0"/><rect x="343.7" y="500" width="1" height="1" fill="#a0a0a0"/><rect x="343.7" y="502" width="1" height="1" fill="#a0a0a0"/><rect x="343.7" y="504" width="1" height="1" fill="#a0a0a0"/><rect x="343.7" y="506" width="1" height="1" fill="#a0a0a0"/><rect x="343.7" y="508" width="1" height="1" fill="#a0a0a0"/><rect x="343.7" y="510" width="1" height="1" fill="#a0a0a0"/><rect x="343.7" y="512" width="1" height="1" fill="#a0a0a0"/><rect x="343.7" y="514" width="1" height="1" fill="#a0a0a0"/><rect x="343.7" y="516" width="1" height="1" fill="#a0a0a0"/><rect x="343.7" y="518" width="1" height="1" fill="#a0a0a0"/><rect x="343.7" y="520" width="1" height="1" fill="#a0a0a0"/><rect x="343.7" y="522" width="1" height="1" fill="#a0a0a0"/><rect x="343.7" y="524" width="1" height="1" fill="#a0a0a0"/><rect x="343.7" y="526" width="1" height="1" fill="#a0a0a0"/><rect x="343.7" y="528" width="1" height="1" fill="#a0a0a0"/><rect x="343.7" y="530" width="1" height="1" fill="#a0a0a0"/><rect x="343.7" y="532" width="1" height="1" fill="#a0a0a0"/><rect x="47.6" y="494" width="0.8" height="40" fill="#d8d8d8"/><rect x="278.8" y="494" width="0.8" height="40" fill="#d8d8d8"/><rect x="341" y="494" width="0.8" height="40" fill="#d8d8d8"/><circle cx="16.8" cy="509.3" r="2.6" fill="#f2f2f2" stroke="#a8a8a8" stroke-width="0.7"/><circle cx="16.8" cy="518.1" r="2.6" fill="#f2f2f2" stroke="#a8a8a8" stroke-width="0.7"/><circle cx="16.8" cy="518.1" r="1.5" fill="#3a4a5a"/><circle cx="16.8" cy="527" r="2.6" fill="#f2f2f2" stroke="#a8a8a8" stroke-width="0.7"/><defs><linearGradient id="bg53" x1="0" y1="0" x2="0" y2="1"><stop offset="0" stop-color="#f6f6f6"/><stop offset="0.5" stop-color="#e6e6e6"/><stop offset="1" stop-color="#d4d4d4"/></linearGradient></defs><rect x="53.6" y="507.6" width="19.5" height="18.8" rx="1.5" fill="url(#bg53)" stroke="#a0a0a0" stroke-width="0.8"/><defs><linearGradient id="bg78" x1="0" y1="0" x2="0" y2="1"><stop offset="0" stop-color="#f6f6f6"/><stop offset="0.5" stop-color="#e6e6e6"/><stop offset="1" stop-color="#d4d4d4"/></linearGradient></defs><rect x="78.80000000000001" y="507.6" width="19.5" height="18.8" rx="1.5" fill="url(#bg78)" stroke="#a0a0a0" stroke-width="0.8"/><defs><linearGradient id="bg103" x1="0" y1="0" x2="0" y2="1"><stop offset="0" stop-color="#f6f6f6"/><stop offset="0.5" stop-color="#e6e6e6"/><stop offset="1" stop-color="#d4d4d4"/></linearGradient></defs><rect x="104.0" y="507.6" width="19.5" height="18.8" rx="1.5" fill="url(#bg103)" stroke="#a0a0a0" stroke-width="0.8"/><rect x="128.9" y="507.6" width="19.5" height="18.8" rx="1.5" fill="#f8f8f8" stroke="#d8d8d8" stroke-width="0.8"/><defs><linearGradient id="bg153" x1="0" y1="0" x2="0" y2="1"><stop offset="0" stop-color="#f6f6f6"/><stop offset="0.5" stop-color="#e6e6e6"/><stop offset="1" stop-color="#d4d4d4"/></linearGradient></defs><rect x="153.6" y="507.6" width="19.5" height="18.8" rx="1.5" fill="url(#bg153)" stroke="#a0a0a0" stroke-width="0.8"/><rect x="178.8" y="507.6" width="19.5" height="18.8" rx="1.5" fill="#f8f8f8" stroke="#d8d8d8" stroke-width="0.8"/><defs><linearGradient id="bg203" x1="0" y1="0" x2="0" y2="1"><stop offset="0" stop-color="#f6f6f6"/><stop offset="0.5" stop-color="#e6e6e6"/><stop offset="1" stop-color="#d4d4d4"/></linearGradient></defs><rect x="203.8" y="507.6" width="19.5" height="18.8" rx="1.5" fill="url(#bg203)" stroke="#a0a0a0" stroke-width="0.8"/><defs><linearGradient id="bg228" x1="0" y1="0" x2="0" y2="1"><stop offset="0" stop-color="#f6f6f6"/><stop offset="0.5" stop-color="#e6e6e6"/><stop offset="1" stop-color="#d4d4d4"/></linearGradient></defs><rect x="228.70000000000002" y="507.6" width="19.5" height="18.8" rx="1.5" fill="url(#bg228)" stroke="#a0a0a0" stroke-width="0.8"/><defs><linearGradient id="bg253" x1="0" y1="0" x2="0" y2="1"><stop offset="0" stop-color="#f6f6f6"/><stop offset="0.5" stop-color="#e6e6e6"/><stop offset="1" stop-color="#d4d4d4"/></linearGradient></defs><rect x="253.6" y="507.6" width="19.5" height="18.8" rx="1.5" fill="url(#bg253)" stroke="#a0a0a0" stroke-width="0.8"/><path d="M60,517 l5.5,-5 v10 Z" fill="#22b822" stroke="#148814" stroke-width="0.6"/><path d="M84.5,517 l3.5,-3 v6 Z M88,517 l3.5,-3 v6 Z" fill="#111"/><rect x="110" y="514" width="1.3" height="6" fill="#111"/><path d="M111.5,517 l4,-3 v6 Z" fill="#111"/><rect x="134.5" y="513.5" width="7.5" height="7.5" fill="#f0a0a8"/><path d="M159.5,514 l4,3 -4,3 Z" fill="#111"/><rect x="163.6" y="514" width="1.3" height="6" fill="#111"/><path d="M182,516 h4 v-1.5 l3,2.5 -3,2.5 v-1.5 h-4 Z" fill="#b0a8e8"/><rect x="187.5" y="512" width="3" height="3" fill="#e8d8c8"/><rect x="190" y="517" width="5.5" height="5" fill="#f0b0b0"/><rect x="207" y="510.5" width="3.5" height="3" fill="#b09060" stroke="#5a4a2a" stroke-width="0.5"/><rect x="209" y="513.5" width="3.5" height="3" fill="#b09060" stroke="#5a4a2a" stroke-width="0.5"/><path d="M209,518 h5 v-1.7 l3.3,2.7 -3.3,2.7 v-1.7 h-5 Z" fill="#1a1a9a"/><rect x="217.5" y="516.5" width="4.5" height="5" fill="#9a8a7a" stroke="#333" stroke-width="0.6"/><path d="M235.3,512 l5.5,5 -5.5,5 Z" fill="#22b822" stroke="#148814" stroke-width="0.6"/><rect x="258.3" y="512" width="10" height="10" fill="#d81818"/><path d="M260.8,514.5 l5,5 M265.8,514.5 l-5,5" stroke="#fff" stroke-width="1.2"/><rect x="288" y="509.3" width="45.5" height="0.9" fill="#c8c8c8"/><path d="M299,506 h5.6 v7 l-2.8,2.8 l-2.8,-2.8 Z" fill="#f4f4f4" stroke="#8a8a8a" stroke-width="0.7"/><rect x="423.3" y="494.3" width="17.5" height="17.8" rx="1.5" fill="#e6e6e6" stroke="#a8a8a8" stroke-width="0.8"/><rect x="427" y="496" width="10" height="2" fill="#222"/><rect x="430.5" y="498" width="3" height="4" fill="#444"/><rect x="429" y="502" width="6" height="6" fill="#c8e8c0"/><rect x="428" y="507.5" width="8" height="2" fill="#111"/><rect x="431.5" y="502" width="1" height="5" fill="#3ac83a"/><rect x="445.5" y="496" width="8.5" height="12.5" fill="#fafafa" stroke="#999" stroke-width="0.6"/><path d="M449.5,501 l2.5,-1.5 l6,6 l-2.5,2.5 Z" fill="#222"/><circle cx="451" cy="501.5" r="0.8" fill="#fff"/><rect x="423.3" y="515.3" width="17.5" height="18.2" rx="1.5" fill="#e6e6e6" stroke="#a8a8a8" stroke-width="0.8"/><rect x="426" y="518" width="5" height="4.5" fill="#b09060" stroke="#5a4a2a" stroke-width="0.5"/><rect x="428" y="521.5" width="5" height="4.5" fill="#c08a60" stroke="#5a4a2a" stroke-width="0.5"/><rect x="431" y="524.5" width="7" height="6" fill="#6ad86a" stroke="#2a8a2a" stroke-width="0.6"/><rect x="444.3" y="515.3" width="17.5" height="18.2" rx="1.5" fill="#e6e6e6" stroke="#a8a8a8" stroke-width="0.8"/><rect x="447" y="518.3" width="11.5" height="12" fill="#f4f4f4" stroke="#555" stroke-width="0.8"/><ellipse cx="454.5" cy="522.5" rx="2.6" ry="2" fill="#2ac82a"/></svg>
<div class="dro" style="left:348.4px;top:495px">X1579.200</div><div class="dro" style="left:386.2px;top:495px">C0.000</div>
<div class="dro" style="left:348.4px;top:505px">Y925.232</div><div class="dro" style="left:386.2px;top:505px">B-41.538</div>
<div class="dro" style="left:348.4px;top:515.7px">Z-316.269</div><div class="dro" style="left:386.2px;top:515.7px"></div>
<div class="dro" style="left:348.4px;top:525.8px">F3584</div><div class="dro" style="left:386.2px;top:525.8px"></div>
<div class="a" id="taskbar"></div>
<svg class="a" style="left:0;top:542px" width="1000" height="21" viewBox="0 542 1000 21"><defs><linearGradient id="tbg" x1="0" y1="542" x2="0" y2="563" gradientUnits="userSpaceOnUse"><stop offset="0" stop-color="#a9c5e6"/><stop offset="0.2" stop-color="#90b2d8"/><stop offset="0.33" stop-color="#4f7aa8"/><stop offset="0.42" stop-color="#1f4a78"/><stop offset="0.55" stop-color="#22548a"/><stop offset="0.7" stop-color="#2a6aae"/><stop offset="1" stop-color="#2c72b8"/></linearGradient><linearGradient id="btng" x1="0" y1="542" x2="0" y2="563" gradientUnits="userSpaceOnUse"><stop offset="0" stop-color="#d0e2f4"/><stop offset="0.35" stop-color="#a8c4e0"/><stop offset="0.5" stop-color="#6a98c4"/><stop offset="1" stop-color="#5a94cc"/></linearGradient><radialGradient id="orb" cx="0.5" cy="0.6" r="0.55"><stop offset="0" stop-color="#4ab0e0"/><stop offset="0.6" stop-color="#1e5a98"/><stop offset="1" stop-color="#234a78"/></radialGradient></defs><rect x="0" y="542" width="1000" height="21" fill="url(#tbg)"/><defs><linearGradient id="tbr" x1="930" y1="0" x2="1000" y2="0" gradientUnits="userSpaceOnUse"><stop offset="0" stop-color="#0a2440" stop-opacity="0"/><stop offset="1" stop-color="#0a2440" stop-opacity="0.55"/></linearGradient></defs><rect x="930" y="542" width="70" height="21" fill="url(#tbr)"/><path d="M689,544 Q704,551 717,563" fill="none" stroke="#b8d4ee" stroke-width="5" opacity="0.3"/><path d="M690,545 Q705,552 716,563" fill="none" stroke="#d0e4f6" stroke-width="1.5" opacity="0.3"/><circle cx="14" cy="552.8" r="9.2" fill="url(#orb)" stroke="#8aa8d0" stroke-opacity="0.6" stroke-width="0.7"/><path d="M9,547.5 q2.5,-1.2 4.8,0 v4.8 q-2.3,-1.2 -4.8,0 Z" fill="#f0782a"/><path d="M14.4,547.5 q2.5,-1.2 4.8,0 v4.8 q-2.3,-1.2 -4.8,0 Z" fill="#7ac83a"/><path d="M9,552.9 q2.5,-1.2 4.8,0 v4.8 q-2.3,-1.2 -4.8,0 Z" fill="#3aa0e8"/><path d="M14.4,552.9 q2.5,-1.2 4.8,0 v4.8 q-2.3,-1.2 -4.8,0 Z" fill="#f8c830"/><path d="M41,553 H51 A5.2,5.2 0 1 0 49.8,556.6" fill="none" stroke="#48c8f0" stroke-width="2.2"/><path d="M38.5,560 q2,-11 16,-14.5" fill="none" stroke="#e8c840" stroke-width="1.2"/><rect x="63" y="542.8" width="31.400000000000006" height="19.8" rx="1.5" fill="url(#btng)" opacity="0.95" stroke="#2a4a6a" stroke-opacity="0.6" stroke-width="0.7"/><rect x="63.8" y="543.4" width="29.800000000000004" height="18.6" rx="1" fill="none" stroke="#e8f2fa" stroke-opacity="0.5" stroke-width="0.5"/><rect x="160.5" y="542.8" width="30.0" height="19.8" rx="1.5" fill="url(#btng)" opacity="0.8" stroke="#2a4a6a" stroke-opacity="0.6" stroke-width="0.7"/><rect x="161.3" y="543.4" width="28.4" height="18.6" rx="1" fill="none" stroke="#e8f2fa" stroke-opacity="0.5" stroke-width="0.5"/><rect x="192" y="542.8" width="31.5" height="19.8" rx="1.5" fill="url(#btng)" opacity="0.8" stroke="#2a4a6a" stroke-opacity="0.6" stroke-width="0.7"/><rect x="192.8" y="543.4" width="29.9" height="18.6" rx="1" fill="none" stroke="#e8f2fa" stroke-opacity="0.5" stroke-width="0.5"/><rect x="225" y="542.8" width="30" height="19.8" rx="1.5" fill="url(#btng)" opacity="0.8" stroke="#2a4a6a" stroke-opacity="0.6" stroke-width="0.7"/><rect x="225.8" y="543.4" width="28.4" height="18.6" rx="1" fill="none" stroke="#e8f2fa" stroke-opacity="0.5" stroke-width="0.5"/><rect x="256.5" y="542.8" width="31.5" height="19.8" rx="1.5" fill="url(#btng)" opacity="0.8" stroke="#2a4a6a" stroke-opacity="0.6" stroke-width="0.7"/><rect x="257.3" y="543.4" width="29.9" height="18.6" rx="1" fill="none" stroke="#e8f2fa" stroke-opacity="0.5" stroke-width="0.5"/><rect x="71" y="547" width="15" height="11" fill="#f0d878" stroke="#b09040" stroke-width="0.5"/><rect x="72" y="551" width="13" height="2" fill="#fff8d8"/><rect x="73" y="546" width="4" height="2" fill="#f8e8a0"/><rect x="104.5" y="547" width="12" height="11" fill="#e06a2a" stroke="#f0b080" stroke-width="0.6"/><path d="M108.5,549.5 l4.5,3 -4.5,3 Z" fill="#fff"/><circle cx="143.5" cy="552.6" r="7" fill="#e8b820"/><path d="M143.5,552.6 L137.4,549.1 A7,7 0 0 1 149.6,549.1 Z" fill="#d83a2a"/><path d="M143.5,552.6 L137.4,549.1 A7,7 0 0 0 143.5,559.6 Z" fill="#2a9a4a"/><circle cx="143.5" cy="552.6" r="3.3" fill="#fff"/><circle cx="143.5" cy="552.6" r="2.5" fill="#3a7ae0"/><path d="M172,546 q-2,4 0,9 M175,547 l2,5 M171,551 h6" stroke="#6ab84a" stroke-width="1.8" fill="none" opacity="0.9"/><rect x="169" y="555.5" width="13" height="4.5" fill="#1a1a1a"/><text x="175.5" y="559.4" font-size="4.2" fill="#fff" text-anchor="middle" font-family="Liberation Sans" font-weight="bold">2016</text><rect x="200" y="544" width="15" height="15.5" fill="#f4f6f4"/><circle cx="203.5" cy="547.5" r="1.6" fill="#6a9a58"/><path d="M203.5,551 v8 M203.5,552.5 q2.5,-3 5,-1.5" stroke="#8a8a8a" stroke-width="2.2" fill="none"/><circle cx="211" cy="555" r="2.6" fill="#5ac82a"/><path d="M207.5,555 h7 M211,551.5 v7 M208.5,552.5 l5,5 M213.5,552.5 l-5,5" stroke="#5ac82a" stroke-width="0.7"/><ellipse cx="238.5" cy="554" rx="6.5" ry="4.5" fill="#d8d0c0" stroke="#8a8070" stroke-width="0.5" transform="rotate(-20 238.5 554)"/><circle cx="235.5" cy="554" r="1" fill="#e83a3a"/><circle cx="238" cy="551.5" r="1" fill="#3a8ae8"/><circle cx="236.5" cy="556.5" r="0.9" fill="#3ab83a"/><path d="M241,558 l6,-12" stroke="#d8a030" stroke-width="1.6"/><rect x="264" y="544" width="15.5" height="15.5" fill="#f4f6f4"/><circle cx="268" cy="547.5" r="1.6" fill="#6a9a58"/><path d="M268,551 v8 M268,552.5 q2.5,-3 5,-1.5" stroke="#8a8a8a" stroke-width="2.2" fill="none"/><path d="M273,552.5 l5.5,3.5 -5.5,3.5 Z" fill="#000"/><text x="873" y="553.5" font-size="6" fill="#e8f0f8" font-family="Liberation Sans">EN</text><path d="M890,554 l1.6,-1.6 1.6,1.6 Z" fill="#e8f0f8"/><rect x="901" y="549.5" width="2.8" height="2.8" fill="#fff"/><rect x="904.3" y="549.5" width="2.8" height="2.8" fill="#fff"/><rect x="901" y="552.8" width="2.8" height="2.8" fill="#fff"/><rect x="904.3" y="552.8" width="2.8" height="2.8" fill="#fff"/><rect x="914" y="549.5" width="1" height="7" fill="#f0f0f0"/><path d="M915,549.5 h3.5 l1.5,1.5 -1.5,1.5 h-3.5 Z" fill="#f0f0f0"/><path d="M926,551 v4.5 h6 v-4.5" fill="none" stroke="#f0f0f0" stroke-width="1"/><rect x="927.5" y="553" width="4" height="2.5" fill="#333"/><path d="M938,551.5 h1.8 l2.2,-2 v8 l-2.2,-2 h-1.8 Z" fill="#f0f0f0"/><path d="M943.5,550.5 v5" stroke="#ccc" stroke-width="0.6"/><text x="970.5" y="550.8" font-size="5.8" fill="#ffffff" text-anchor="middle" font-family="Liberation Sans" y2="" >15:00</text><text x="970.5" y="559.7" font-size="5.8" fill="#ffffff" text-anchor="middle" font-family="Liberation Sans">14/07/2016</text><rect x="992" y="542" width="8" height="21" fill="#102a48" opacity="0.7"/></svg>

</body></html>
